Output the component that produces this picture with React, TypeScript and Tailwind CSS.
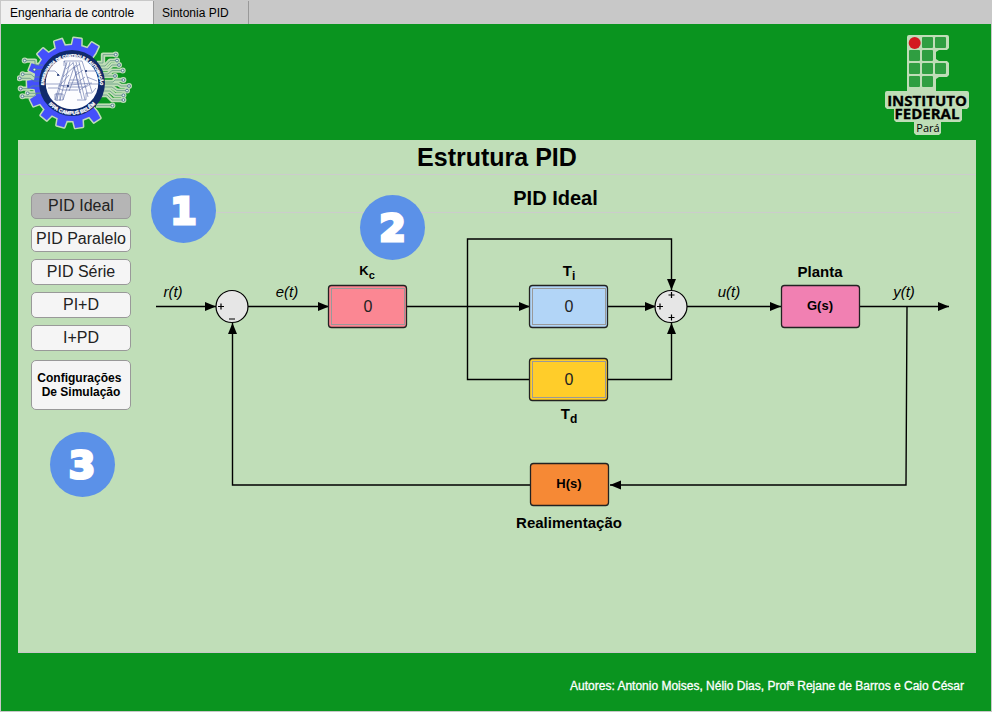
import { useState } from "react";

const SANS = "font-['Liberation_Sans',Arial,sans-serif]";

const TEETH = [59, 83, 108, 135, 159, 182, 206, 231, 255, 279, 304];

function polar(radius: number, degrees: number) {
  const rad = (degrees * Math.PI) / 180;
  return `${(radius * Math.cos(rad)).toFixed(2)},${(-radius * Math.sin(rad)).toFixed(2)}`;
}

const gearPoints = [
  polar(20, 50),
  ...TEETH.flatMap((a) => [polar(38, a - 7), polar(45, a - 5), polar(45, a + 5), polar(38, a + 7)]),
  polar(20, 312),
].join(" ");

const TRACES = [
  "M43.7-28.4H31V-20H25",
  "M45-22.4H38L33-17H28",
  "M47-18H40L36-14H28",
  "M50.7-12.4H40L36-9H26",
  "M43-7H28",
  "M51.4-3H43L41-1H28",
  "M57 3H49L46 1H30",
  "M55 7.6H45L40 4H30",
  "M51.4 12.3H43L38 8H30",
  "M51.4 17H40L35 12H28",
  "M40.4 22.6H24",
  "M-47.3-22.4H-37V-18H-29",
  "M-37.6-13.4H-28",
  "M-49.3-8.7H-41L-38-6H-28",
  "M-52.3-4.7H-42L-38-2H-28",
  "M-51.3 5.6H-43L-40 3H-28",
  "M-44.3 10.3H-28",
  "M-49.6 13.3H-38L-35 10H-29",
];

const NODES = [
  [43.7, -28.4], [45, -22.4], [47, -18], [50.7, -12.4], [43, -7], [51.4, -3], [57, 3], [55, 7.6],
  [51.4, 12.3], [51.4, 17], [40.4, 22.6], [-47.3, -22.4], [-37.6, -13.4], [-49.3, -8.7],
  [-52.3, -4.7], [-51.3, 5.6], [-44.3, 10.3], [-49.6, 13.3],
];

function CourseLogo() {
  return (
    <svg viewBox="-55 -48 116 96" className="h-[96px] w-[116px]" role="img" aria-label="Engenharia de Controle e Automação">
      <g fill="none" stroke="#bfddb7" strokeWidth="4.4" strokeLinejoin="round">
        {TRACES.map((d) => <path key={d} d={d} />)}
      </g>
      {NODES.map(([x, y]) => <circle key={`${x},${y}`} cx={x} cy={y} r="3" fill="#bfddb7" />)}
      <polygon points={gearPoints} fill="#4450fb" stroke="#bfddb7" strokeWidth="3" strokeLinejoin="round" paintOrder="stroke" />
      <g fill="none" stroke="#5a9080" strokeWidth="0.7">
        {TRACES.map((d) => <path key={d} d={d} />)}
      </g>
      {NODES.map(([x, y]) => (
        <circle key={`${x},${y}`} cx={x} cy={y} r="1.4" fill="#e8f4ee" stroke="#3d6a85" strokeWidth="0.8" />
      ))}
      <circle r="33" fill="#112a6b" />
      <circle r="26.3" fill="#fdfdff" />
      <g fill="none" stroke="#5a6ca4" strokeWidth="0.6">
        <path d="M-8-22H10M-8-22L-6-19L-17 17M-5-21L-15 16M-2-21L-12 17M2-16L-9 17M5-12L-3 8" />
        <path d="M-8-22V-17M1-21L10 16M4-21L13 17M7-21L16 14M10-22L20 9M2-16L8 10M-6-14L1-20M-9-6L4-18M-11 1L-3-8" />
        <path d="M2-15L8-19M4-8L11-13M6-1L13-6M8 7L16 1" />
        <path d="M-26 1H-12L-8 4H14L18 1H26M-24 5H-14L-10 7H6M-14 3L20 0M5 17H14V10H20L24 5" />
        <path d="M-17 11H-9V17H-17ZM-15 10V18M-12 10V18M-23-12H-17L-12-7M14-12H26M15-6L25-2M-2-3H7M-4 0H9" />
      </g>
      <g fill="#112a6b"><circle cx="-14" cy="-8" r="1" /><circle cx="14" cy="-12" r="1" /><circle cx="-4" cy="3" r="1" /></g>
      <path id="arc-top" d="M-28 2A28 28 0 1 1 28 2" fill="none" />
      <path id="arc-bottom" d="M-31.6 0A31.6 31.6 0 0 0 31.6 0" fill="none" />
      <g fill="#fff" stroke="#fff" strokeWidth="0.3" textAnchor="middle" fontWeight="700">
        <text fontSize="4"><textPath href="#arc-top" startOffset="50%">ENGENHARIA DE CONTROLE E AUTOMAÇÃO</textPath></text>
        <text fontSize="5"><textPath href="#arc-bottom" startOffset="50%">IFPA CAMPUS BELÉM</textPath></text>
      </g>
    </svg>
  );
}

const CELLS = [[1, 0], [2, 0], [0, 1], [1, 1], [0, 2], [1, 2], [2, 2], [0, 3], [1, 3]];

function InstituteLogo() {
  return (
    <svg viewBox="0 0 84 100" className="h-[100px] w-[84px]" role="img" aria-label="Instituto Federal Pará">
      <path
        d="M24 0H62Q64 0 64 2V13L62 15H54L51 17V24L54 26H62L64 28V40L62 42H54L51 44V56H82Q84 56 84 58V72L82 74H77V85L75 87H56V98L54 100H31L29 98V87H11L9 85V74H2L0 72V58Q0 56 2 56H22V2Q22 0 24 0Z"
        fill="#bfddb7"
      />
      {CELLS.map(([c, r]) => (
        <rect key={`${c}-${r}`} x={24 + c * 13} y={2 + r * 13} width="11" height="11" rx="1" fill="#2f9e41" />
      ))}
      <circle cx="29.7" cy="8" r="6" fill="#d3191f" />
      <g textAnchor="middle" fill="#000" className="font-['Open_Sans','Noto_Sans',sans-serif]">
        <text x="42" y="71" fontSize="15" fontWeight="700" stroke="#000" strokeWidth="0.3">INSTITUTO</text>
        <text x="42" y="84" fontSize="15" fontWeight="700" stroke="#000" strokeWidth="0.3">FEDERAL</text>
        <text x="43" y="97" fontSize="11">Pará</text>
      </g>
    </svg>
  );
}

function Badge({ children }: { children: string }) {
  return (
    <span className="flex size-[65px] items-center justify-center rounded-full bg-[#5b91e8] font-['DejaVu_Sans',sans-serif] text-[38px] leading-none font-bold text-white [-webkit-text-stroke:3px_white]">
      {children}
    </span>
  );
}

function GainInput({ label, color, place }: { label: string; color: string; place: string }) {
  const [value, setValue] = useState("0");
  return (
    <input
      aria-label={label}
      value={value}
      onChange={(e) => setValue(e.target.value)}
      className={`absolute h-[37px] w-[74px] border border-[#999] text-center text-base text-[#222] outline-none ${color} ${place}`}
    />
  );
}

function Diagram() {
  return (
    <div className="relative h-[327px] w-[809px]">
      <svg viewBox="0 0 809 327" className="block h-[327px] w-[809px]" role="img" aria-label="Diagrama de blocos do PID ideal">
        <defs>
          <marker id="head" viewBox="0 0 11 10" refX="11" refY="5" markerWidth="11" markerHeight="10" markerUnits="userSpaceOnUse" orient="auto">
            <path d="M0 0.5L11 5L0 9.5Z" />
          </marker>
        </defs>
        <g fill="none" stroke="#000" strokeWidth="1.4">
          <path d="M5 93.5H65" markerEnd="url(#head)" />
          <path d="M97 93.5H178" markerEnd="url(#head)" />
          <path d="M256 93.5H379" markerEnd="url(#head)" />
          <path d="M457 93.5H505" markerEnd="url(#head)" />
          <path d="M536 93.5H630" markerEnd="url(#head)" />
          <path d="M709 93.5H798" markerEnd="url(#head)" />
          <path d="M316.5 93.5V26H520.5V77" markerEnd="url(#head)" />
          <path d="M316.5 93.5V166.5H379" />
          <path d="M457 166.5H520.5V110" markerEnd="url(#head)" />
          <path d="M756 93.5L755 272H459" markerEnd="url(#head)" />
          <path d="M379 272H81.5V110" markerEnd="url(#head)" />
        </g>
        <g fill="#e6e6e6" stroke="#000" strokeWidth="1.2">
          <circle cx="81" cy="93.5" r="16" />
          <circle cx="520" cy="93.5" r="16" />
        </g>
        <path
          d="M67 93.5h6M70 90.5v6M78 106h6M506 93.5h6M509 90.5v6M517.5 82h6M520.5 79v6M517.5 104.5h6M520.5 101.5v6"
          stroke="#000"
          strokeWidth="1.2"
        />
        <g stroke="#222" strokeWidth="1.3">
          <rect x="177.5" y="72.5" width="78" height="42" rx="3" fill="#fb8793" />
          <rect x="378.5" y="72.5" width="78" height="42" rx="3" fill="#b2d5f7" />
          <rect x="378.5" y="145.5" width="78" height="42" rx="3" fill="#ffcd2a" />
          <rect x="630.5" y="72.5" width="78" height="42" rx="3" fill="#f180b2" />
          <rect x="379.5" y="250.5" width="78" height="42" rx="3" fill="#f68935" />
        </g>
        <g textAnchor="middle" fontSize="15" fontStyle="italic">
          <text x="22" y="84">r(t)</text>
          <text x="136" y="84">e(t)</text>
          <text x="578" y="84">u(t)</text>
          <text x="753" y="84">y(t)</text>
        </g>
        <g textAnchor="middle" fontSize="15" fontWeight="700">
          <text x="669" y="64">Planta</text>
          <text x="418" y="315">Realimentação</text>
          <text x="418" y="63">T<tspan dy="4" fontSize="12">i</tspan></text>
          <text x="418" y="206">T<tspan dy="4" fontSize="12">d</tspan></text>
          <text x="216" y="62" fontSize="13">K<tspan dy="4" fontSize="11">c</tspan></text>
          <text x="669" y="97" fontSize="13">G(s)</text>
          <text x="418" y="275" fontSize="13">H(s)</text>
        </g>
      </svg>
      <GainInput label="Kc" color="bg-[#fb8793]" place="top-[75px] left-[180px]" />
      <GainInput label="Ti" color="bg-[#b2d5f7]" place="top-[75px] left-[381px]" />
      <GainInput label="Td" color="bg-[#ffcd2a]" place="top-[148px] left-[381px]" />
    </div>
  );
}

const MODES = ["PID Ideal", "PID Paralelo", "PID Série", "PI+D", "I+PD"];

export default function App() {
  const [mode, setMode] = useState(MODES[0]);
  return (
    <div className={`flex min-h-screen flex-col bg-[#c8c8c8] px-px pt-px pb-px text-black ${SANS}`}>
      <div role="tablist" className="flex h-[23px] text-xs">
        <button role="tab" aria-selected="true" className="w-[153px] border-r border-[#999] bg-[#f0f0f0] pl-[9px] text-left">
          Engenharia de controle
        </button>
        <button role="tab" aria-selected="false" className="w-[95px] border-r border-[#999] pl-2 text-left">
          Sintonia PID
        </button>
      </div>

      <div className="flex flex-1 flex-col bg-[#0a941f]">
        <header className="flex h-[116px] items-start justify-between pt-[11px] pr-[22px] pl-4">
          <CourseLogo />
          <InstituteLogo />
        </header>

        <main className="mr-[15px] ml-[17px] flex flex-1 flex-col border-b border-[#c8c8c8] bg-[#c0deb8]">
          <h1 className="flex h-[35px] items-center justify-center border-b border-[#cccccc] pt-0.5 text-[25px] font-bold">Estrutura PID</h1>
          <div className="flex flex-1">
            <nav className="flex w-[133px] shrink-0 flex-col items-start pt-[18px] pl-[13px]">
              <div className="flex flex-col gap-[7px]">
                {MODES.map((m) => (
                  <button
                    key={m}
                    onClick={() => setMode(m)}
                    className={`h-[26px] w-[100px] rounded-[5px] border border-[#999] text-base leading-6 text-[#222] whitespace-nowrap ${m === mode ? "bg-[#b5b5b5]" : "bg-[#f5f5f5]"}`}
                  >
                    {m}
                  </button>
                ))}
              </div>
              <button className="mt-[9px] h-[50px] w-[100px] rounded-[5px] border border-[#999] bg-[#f5f5f5] text-xs leading-[14px] font-bold whitespace-pre">
                {"Configurações \nDe Simulação"}
              </button>
              <div className="mt-[22px] flex w-[102px] justify-center">
                <Badge>3</Badge>
              </div>
            </nav>

            <section className="relative mr-4 flex-1">
              <h2 className="flex h-[38px] items-center justify-center border-b border-[#cccccc] pt-2 text-xl font-bold">PID Ideal</h2>
              <div className="flex justify-center">
                <Diagram />
              </div>
              <div className="absolute top-[3px] left-0">
                <Badge>1</Badge>
              </div>
              <div className="absolute top-5 left-[209px]">
                <Badge>2</Badge>
              </div>
            </section>
          </div>
        </main>

        <footer className="pt-[25px] pr-[27px] pb-[17px] text-right text-xs leading-4 text-white [-webkit-text-stroke:0.3px_white]">
          Autores: Antonio Moises, Nélio Dias, Profª Rejane de Barros e Caio César
        </footer>
      </div>
    </div>
  );
}
